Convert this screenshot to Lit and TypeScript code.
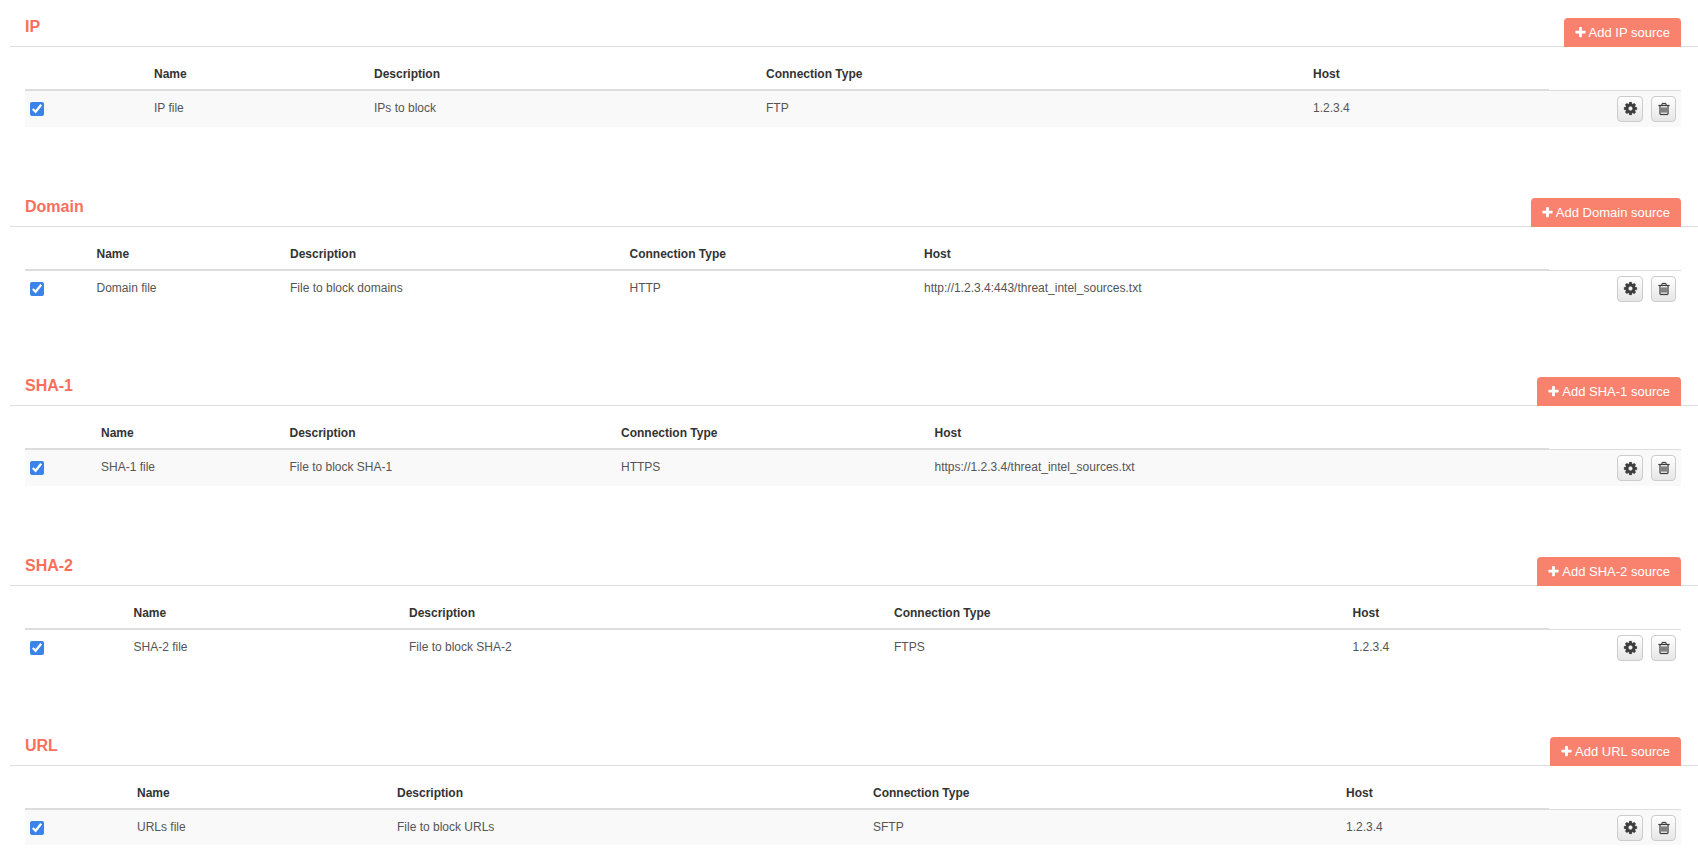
import { LitElement, html, css, svg } from "lit";
import { customElement } from "lit/decorators.js";

const GEAR = "M1152 896q0-106-75-181t-181-75-181 75-75 181 75 181 181 75 181-75 75-181zm512-109v222q0 12-8 24t-20 13l-185 28q-19 54-39 91 35 50 107 138 10 12 10 25t-9 23q-27 37-99 108t-94 71q-12 0-26-9l-138-108q-44 23-91 38-16 136-29 186-7 28-36 28h-222q-14 0-24.5-8.5t-11.5-21.5l-28-184q-49-16-90-37l-141 107q-10 9-25 9-14 0-25-11-126-114-165-168-7-10-7-23 0-12 8-23 15-21 51-66.5t54-70.5q-27-50-41-99l-183-27q-13-2-21-12.5t-8-23.5v-222q0-12 8-23t19-13l186-28q14-46 39-92-40-57-107-138-10-12-10-24 0-10 9-23 26-36 98.5-107.5t94.5-71.5q13 0 26 10l138 107q44-23 91-38 16-136 29-186 7-28 36-28h222q14 0 24.5 8.5t11.5 21.5l28 184q49 16 90 37l142-107q9-8 24-8 13 0 25 10 129 119 165 170 7 8 7 22 0 12-8 24-15 21-51 66.5t-54 70.5q26 50 41 98l183 28q13 2 21 12.5t8 23.5z";
const TRASH = "M704 736v576q0 14-9 23t-23 9h-64q-14 0-23-9t-9-23v-576q0-14 9-23t23-9h64q14 0 23 9t9 23zm256 0v576q0 14-9 23t-23 9h-64q-14 0-23-9t-9-23v-576q0-14 9-23t23-9h64q14 0 23 9t9 23zm256 0v576q0 14-9 23t-23 9h-64q-14 0-23-9t-9-23v-576q0-14 9-23t23-9h64q14 0 23 9t9 23zm128 724v-948h-896v948q0 22 7 40.5t14.5 27 10.5 8.5h832q3 0 10.5-8.5t14.5-27 7-40.5zm-672-1076h448l-48-117q-7-9-17-11h-317q-10 2-17 11zm928 32v64q0 14-9 23t-23 9h-96v948q0 83-47 143.5t-113 60.5h-832q-66 0-113-58.5t-47-141.5v-952h-96q-14 0-23-9t-9-23v-64q0-14 9-23t23-9h309l70-167q15-37 54-63t79-26h320q40 0 79 26t54 63l70 167h309q14 0 23 9t9 23z";
const PLUS = "M1600 736v192q0 40-28 68t-68 28h-416v416q0 40-28 68t-68 28h-192q-40 0-68-28t-28-68v-416h-416q-40 0-68-28t-28-68v-192q0-40 28-68t68-28h416v-416q0-40 28-68t68-28h192q40 0 68 28t28 68v416h416q40 0 68 28t28 68z";

const icon = (d: string, size: number) =>
  html`<svg class="icon" width=${size} height=${size} viewBox="0 0 1792 1792" aria-hidden="true">${svg`<path d=${d}></path>`}</svg>`;

type Source = {
  title: string;
  label: string;
  desc: string;
  conn: string;
  host: string;
  cols: number[];
  striped: boolean;
};

// Column start positions (text x) of Name, Description, Connection Type, Host.
const SOURCES: Source[] = [
  { title: "IP", label: "IP file", desc: "IPs to block", conn: "FTP", host: "1.2.3.4", cols: [154, 374, 766, 1313], striped: true },
  { title: "Domain", label: "Domain file", desc: "File to block domains", conn: "HTTP", host: "http://1.2.3.4:443/threat_intel_sources.txt", cols: [96.5, 290, 629.5, 924], striped: false },
  { title: "SHA-1", label: "SHA-1 file", desc: "File to block SHA-1", conn: "HTTPS", host: "https://1.2.3.4/threat_intel_sources.txt", cols: [101, 289.5, 621, 934.5], striped: true },
  { title: "SHA-2", label: "SHA-2 file", desc: "File to block SHA-2", conn: "FTPS", host: "1.2.3.4", cols: [133.5, 409, 894, 1352.5], striped: false },
  { title: "URL", label: "URLs file", desc: "File to block URLs", conn: "SFTP", host: "1.2.3.4", cols: [137, 397, 873, 1346], striped: true },
];

const TABLE_LEFT = 25;
const ACTIONS_LEFT = 1549;
const TABLE_RIGHT = 1681;

@customElement("app-root")
export class AppRoot extends LitElement {
  static styles = css`
    :host {
      display: block;
      font-family: "Liberation Sans", Arial, sans-serif;
      font-size: 12px;
      line-height: 17px;
      color: #555;
      background: #fff;
      height: 860px;
      overflow: hidden;
    }
    .section {
      height: 179.7px;
      padding-left: 10px;
      box-sizing: border-box;
    }
    .head {
      height: 46.9px;
      box-sizing: border-box;
      border-bottom: 1px solid #ddd;
      padding: 0 17px 0 15px;
      display: flex;
      justify-content: space-between;
      align-items: flex-start;
    }
    h2 {
      margin: 17.9px 0 0;
      font-size: 16px;
      line-height: 18px;
      font-weight: 700;
      color: #f8705b;
    }
    .add {
      margin-top: 17.9px;
      height: 29px;
      box-sizing: border-box;
      border: 0;
      border-radius: 4px 4px 0 0;
      background: #f9826f;
      color: #fff;
      font: 13px/29px "Liberation Sans", Arial, sans-serif;
      padding: 0 11px 0 10px;
      display: flex;
      align-items: center;
      gap: 2px;
    }
    .add .icon { fill: #fff; }
    table {
      margin: 9px 17px 0 15px;
      width: 1656px;
      table-layout: fixed;
      border-collapse: separate;
      border-spacing: 0;
    }
    th {
      text-align: left;
      font-weight: 700;
      color: #333;
      height: 17px;
      padding: 10px 8px 6px;
      border-bottom: 2px solid #ddd;
    }
    th:last-child { border-bottom: 0; box-shadow: inset 0 -1px 0 #ddd; }
    td {
      padding: 9px 8px 7px;
      height: 19.6px;
      vertical-align: top;
    }
    tr.striped td { background: #f9f9f9; }
    .check {
      display: block;
      width: 14px;
      height: 14px;
      margin: 2px 0 0 -3px;
      accent-color: #3a83e8;
    }
    .actions {
      display: flex;
      justify-content: flex-end;
      gap: 8px;
      margin: -4px -3px -2.4px 0;
    }
    .btn {
      width: 26px;
      height: 26px;
      box-sizing: border-box;
      padding: 0;
      border: 1px solid #ccc;
      border-radius: 4px;
      background: linear-gradient(#fff, #e6e6e6);
      display: flex;
      align-items: center;
      justify-content: center;
    }
    .btn.narrow { width: 25px; }
    .btn .icon { fill: #3d3d3d; stroke: #3d3d3d; stroke-width: 30; }
  `;

  private renderSource(s: Source) {
    const edges = [TABLE_LEFT, ...s.cols.map((c) => c - 8), ACTIONS_LEFT, TABLE_RIGHT];
    const widths = edges.slice(1).map((e, i) => e - edges[i]);
    return html`
      <section class="section">
        <div class="head">
          <h2>${s.title}</h2>
          <button class="add">${icon(PLUS, 13)}<span>Add ${s.title} source</span></button>
        </div>
        <table>
          <colgroup>
            ${widths.map((w) => html`<col style="width:${w}px" />`)}
          </colgroup>
          <thead>
            <tr>
              <th></th>
              <th>Name</th>
              <th>Description</th>
              <th>Connection Type</th>
              <th>Host</th>
              <th></th>
            </tr>
          </thead>
          <tbody>
            <tr class=${s.striped ? "striped" : ""}>
              <td><input class="check" type="checkbox" checked /></td>
              <td>${s.label}</td>
              <td>${s.desc}</td>
              <td>${s.conn}</td>
              <td>${s.host}</td>
              <td>
                <div class="actions">
                  <button class="btn">${icon(GEAR, 15)}</button>
                  <button class="btn narrow">${icon(TRASH, 14)}</button>
                </div>
              </td>
            </tr>
          </tbody>
        </table>
      </section>
    `;
  }

  render() {
    return html`${SOURCES.map((s) => this.renderSource(s))}`;
  }
}
